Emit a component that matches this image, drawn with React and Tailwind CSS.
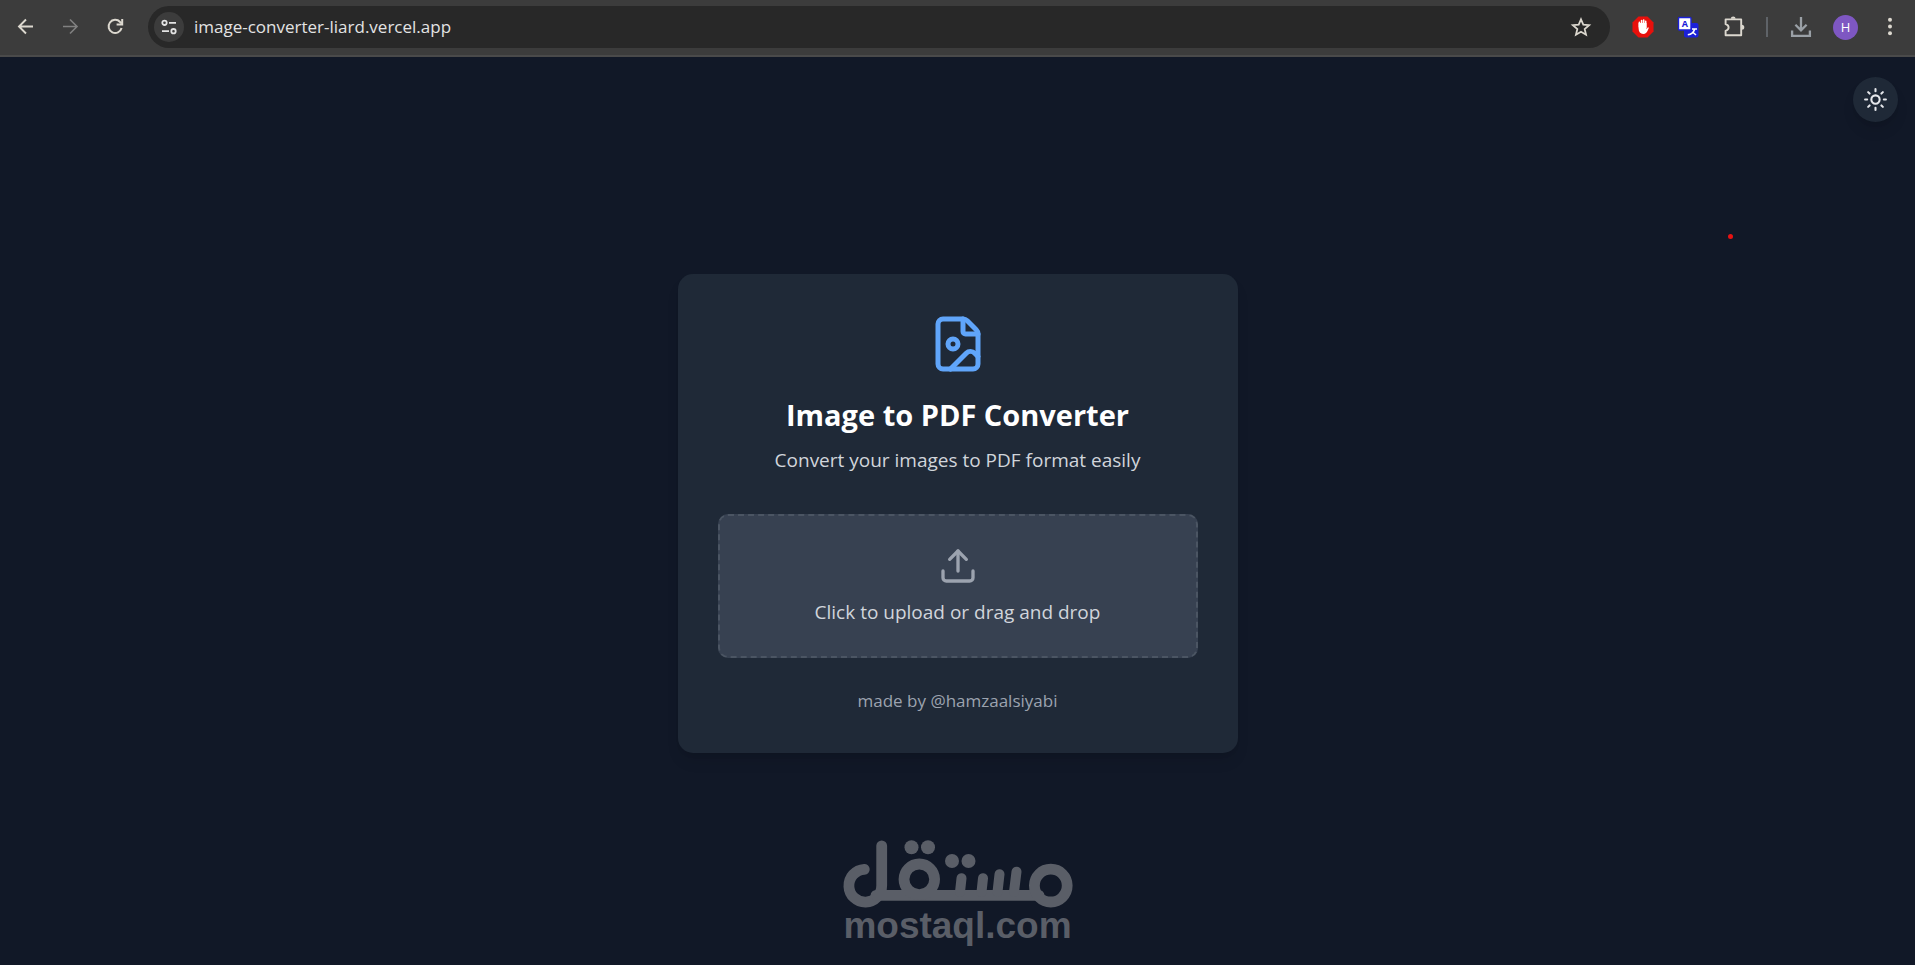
import { FileImage, Sun, Upload } from "lucide-react";

const iconButton = "flex shrink-0 items-center justify-center text-[#dcd8cf]";

const BrowserBar = () => {
  return (
    <header className="flex h-[57px] w-full items-center border-b-2 border-[#4a4a4a] bg-[#3c3c3c] pb-px">
      <div className="flex items-center pl-[15px]">
        <button aria-label="Back" className={iconButton}>
          <svg width="22" height="22" viewBox="0 0 22 22" fill="none" stroke="currentColor" strokeWidth="1.9">
            <path d="M18 10.5H4M11 3.5l-7 7 7 7" />
          </svg>
        </button>
        <button aria-label="Forward" className="ml-[22px] flex shrink-0 text-[#818181]">
          <svg width="22" height="22" viewBox="0 0 22 22" fill="none" stroke="currentColor" strokeWidth="1.6">
            <path d="M4 10.5h14M11 3.5l7 7-7 7" />
          </svg>
        </button>
        <button aria-label="Reload" className={`${iconButton} ml-[23px]`}>
          <svg width="22" height="22" viewBox="0 0 22 22" fill="none" stroke="currentColor" strokeWidth="2">
            <path d="M17.6 12.1A6.6 6.6 0 1 1 16.1 6L17.8 7.6" />
            <path d="M18.2 3v5.6h-5.6" />
          </svg>
        </button>
      </div>

      <div className="ml-[22px] flex h-[42px] flex-1 items-center rounded-full bg-[#282828] pl-[6px] pr-[18px]">
        <button aria-label="Site information" className="flex size-[30px] shrink-0 items-center justify-center rounded-full bg-[#3c3c3c] text-[#e3e3e3]">
          <svg width="18" height="18" viewBox="0 0 18 18" fill="none" stroke="currentColor" strokeWidth="1.8">
            <circle cx="4.5" cy="4.8" r="2.2" />
            <path d="M9 4.8h7M2 13.2h7" />
            <circle cx="13.5" cy="13.2" r="2.2" />
          </svg>
        </button>
        <input
          aria-label="Address"
          className="ml-[10px] min-w-0 flex-1 bg-transparent text-[17px] text-[#e3e3e3] outline-none"
          defaultValue="image-converter-liard.vercel.app"
        />
        <button aria-label="Bookmark" className={iconButton}>
          <svg width="22" height="22" viewBox="0 0 24 24" fill="none" stroke="currentColor" strokeWidth="1.9">
            <path d="M12 3.6l2.5 5.9 6.4.5-4.9 4.2 1.5 6.2L12 17.1l-5.5 3.3L8 14.2 3.1 10l6.4-.5z" />
          </svg>
        </button>
      </div>

      <div className="flex items-center pl-[22px] pr-[13px]">
        <button aria-label="Ad blocker" className={iconButton}>
          <svg width="22" height="22" viewBox="0 0 22 22">
            <path d="M6.5 0.5h9l6 6v9l-6 6h-9l-6-6v-9z" fill="#e8100c" />
            <path
              d="M6.6 7v5.6c0 3.4 1.8 5.4 4.6 5.4 2.4 0 3.6-1.4 4.4-3.2l1.3-3-1-.5-1.4 1.9V7z"
              fill="#fff"
            />
            <path d="M7.4 11V6.4M9.6 11V4.6M11.7 11V4M13.7 11.5V5.4" stroke="#fff" strokeWidth="1.6" strokeLinecap="round" />
          </svg>
        </button>
        <button aria-label="Translate" className={`${iconButton} ml-[23px]`}>
          <svg width="22" height="22" viewBox="0 0 22 22">
            <rect x="7" y="7" width="14.5" height="14.5" rx="2" fill="#1b20d8" />
            <rect x="1.5" y="1.5" width="12.5" height="12.5" rx="1" fill="#fff" stroke="#1b20d8" strokeWidth="1.4" />
            <text x="7.8" y="10.8" textAnchor="middle" fontSize="9" fontWeight="700" fill="#1b20d8">A</text>
            <path d="M10.8 18.8c3.4-.4 5.8-2.4 6.8-5.6M15 13h5M15.5 16l3.5 3" stroke="#fff" strokeWidth="1.6" fill="none" />
          </svg>
        </button>
        <button aria-label="Extensions" className={`${iconButton} ml-[24px]`}>
          <svg width="22" height="22" viewBox="0 0 22 22" fill="none" stroke="currentColor" strokeWidth="1.9">
            <path d="M2.6 3.4h15.6v15.8H2.6v-4.4c2-.6 3-1.7 3-3.3s-1-2.7-3-3.3z" strokeLinejoin="round" />
            <path d="M7.8 2.8a2.4 2.4 0 0 1 4.8 0zM18.8 8.8a2.5 2.5 0 0 1 0 5z" fill="currentColor" stroke="none" />
          </svg>
        </button>
        <span className="ml-[21px] h-5 w-[2px] bg-[#5f6368]" />
        <button aria-label="Downloads" className="ml-[21px] flex shrink-0 text-[#9aa0a6]">
          <svg width="24" height="24" viewBox="0 0 24 24" fill="none" stroke="currentColor" strokeWidth="2.3">
            <path d="M12 2v13.4M6.4 9.8l5.6 5.6 5.6-5.6M3.1 15.6v5.2h17.8v-5.2" />
          </svg>
        </button>
        <button aria-label="Profile" className="ml-[20px] flex size-[25px] shrink-0 items-center justify-center rounded-full bg-[#7e57c2] text-[13px] leading-none text-white">
          H
        </button>
        <button aria-label="Menu" className={`${iconButton} ml-[20px]`}>
          <svg width="24" height="24" viewBox="0 0 24 24" fill="currentColor">
            <circle cx="12" cy="4.7" r="2" />
            <circle cx="12" cy="11.5" r="2" />
            <circle cx="12" cy="18.3" r="2" />
          </svg>
        </button>
      </div>
    </header>
  );
};

const Watermark = () => {
  return (
    <div className="flex flex-col items-center text-[#5a5e67]">
      <svg width="230" height="68" viewBox="0 0 230 68" fill="none" stroke="currentColor" strokeWidth="10.8" strokeLinecap="round" aria-hidden="true">
        <path d="M21.3 29.3A16.4 16.4 0 1 0 38.7 45.5V5.8" />
        <path d="M33 55.3H196" />
        <circle cx="76.3" cy="39.3" r="15.3" />
        <circle cx="207.8" cy="45.6" r="16.4" />
        <path d="M117 52l1.5-13.8M138.5 52l1.5-13.8M154.500 52l2-17.8M171 52l2.500-20.3" strokeWidth="10" />
        <g fill="currentColor" stroke="none">
          <circle cx="68.500" cy="7.200" r="7" />
          <circle cx="85" cy="7.200" r="7" />
          <circle cx="109" cy="21" r="7" />
          <circle cx="125.500" cy="21" r="7" />
        </g>
      </svg>
      <span className="font-['Liberation_Sans',sans-serif] text-[37px] leading-9 font-bold">mostaql.com</span>
    </div>
  );
};

const App = () => {
  return (
    <div className="flex min-h-screen flex-col bg-[#111827] font-['Open_Sans','Noto_Sans',sans-serif]">
      <BrowserBar />
      <main className="relative flex flex-1 flex-col items-center px-5 pt-[217px]">
        <button
          aria-label="Toggle theme"
          className="absolute top-5 right-[17px] flex size-[45px] items-center justify-center rounded-full bg-[#1f2937] text-gray-200 shadow-lg"
        >
          <Sun size={25} />
        </button>
        <span className="absolute top-[177px] right-[182px] size-[5px] rounded-full bg-[#e81212]" />

        <div className="w-full max-w-[560px] rounded-[15px] bg-[#1f2937] p-10 shadow-lg">
          <div className="mb-[39px] flex flex-col items-center text-center">
            <FileImage size={60} className="mb-5 text-[#60a5fa]" />
            <h1 className="text-[29px] leading-[42px] font-bold text-white">Image to PDF Converter</h1>
            <p className="mt-[9px] text-[19px] leading-[30px] text-[#d1d5db]">Convert your images to PDF format easily</p>
          </div>
          <button className="flex h-36 w-full flex-col items-center justify-center rounded-[10px] border-2 border-dashed border-[#4b5563] bg-[#374151]">
            <Upload size={40} className="mb-[11px] text-[#9ca3af]" />
            <span className="text-[19px] leading-[30px] text-[#d1d5db]">Click to upload or drag and drop</span>
          </button>
          <p className="mt-[31px] text-center text-[17px] leading-6 text-[#9ca3af]">made by @hamzaalsiyabi</p>
        </div>

        <div className="mt-[87px]">
          <Watermark />
        </div>
      </main>
    </div>
  );
};

export default App;
